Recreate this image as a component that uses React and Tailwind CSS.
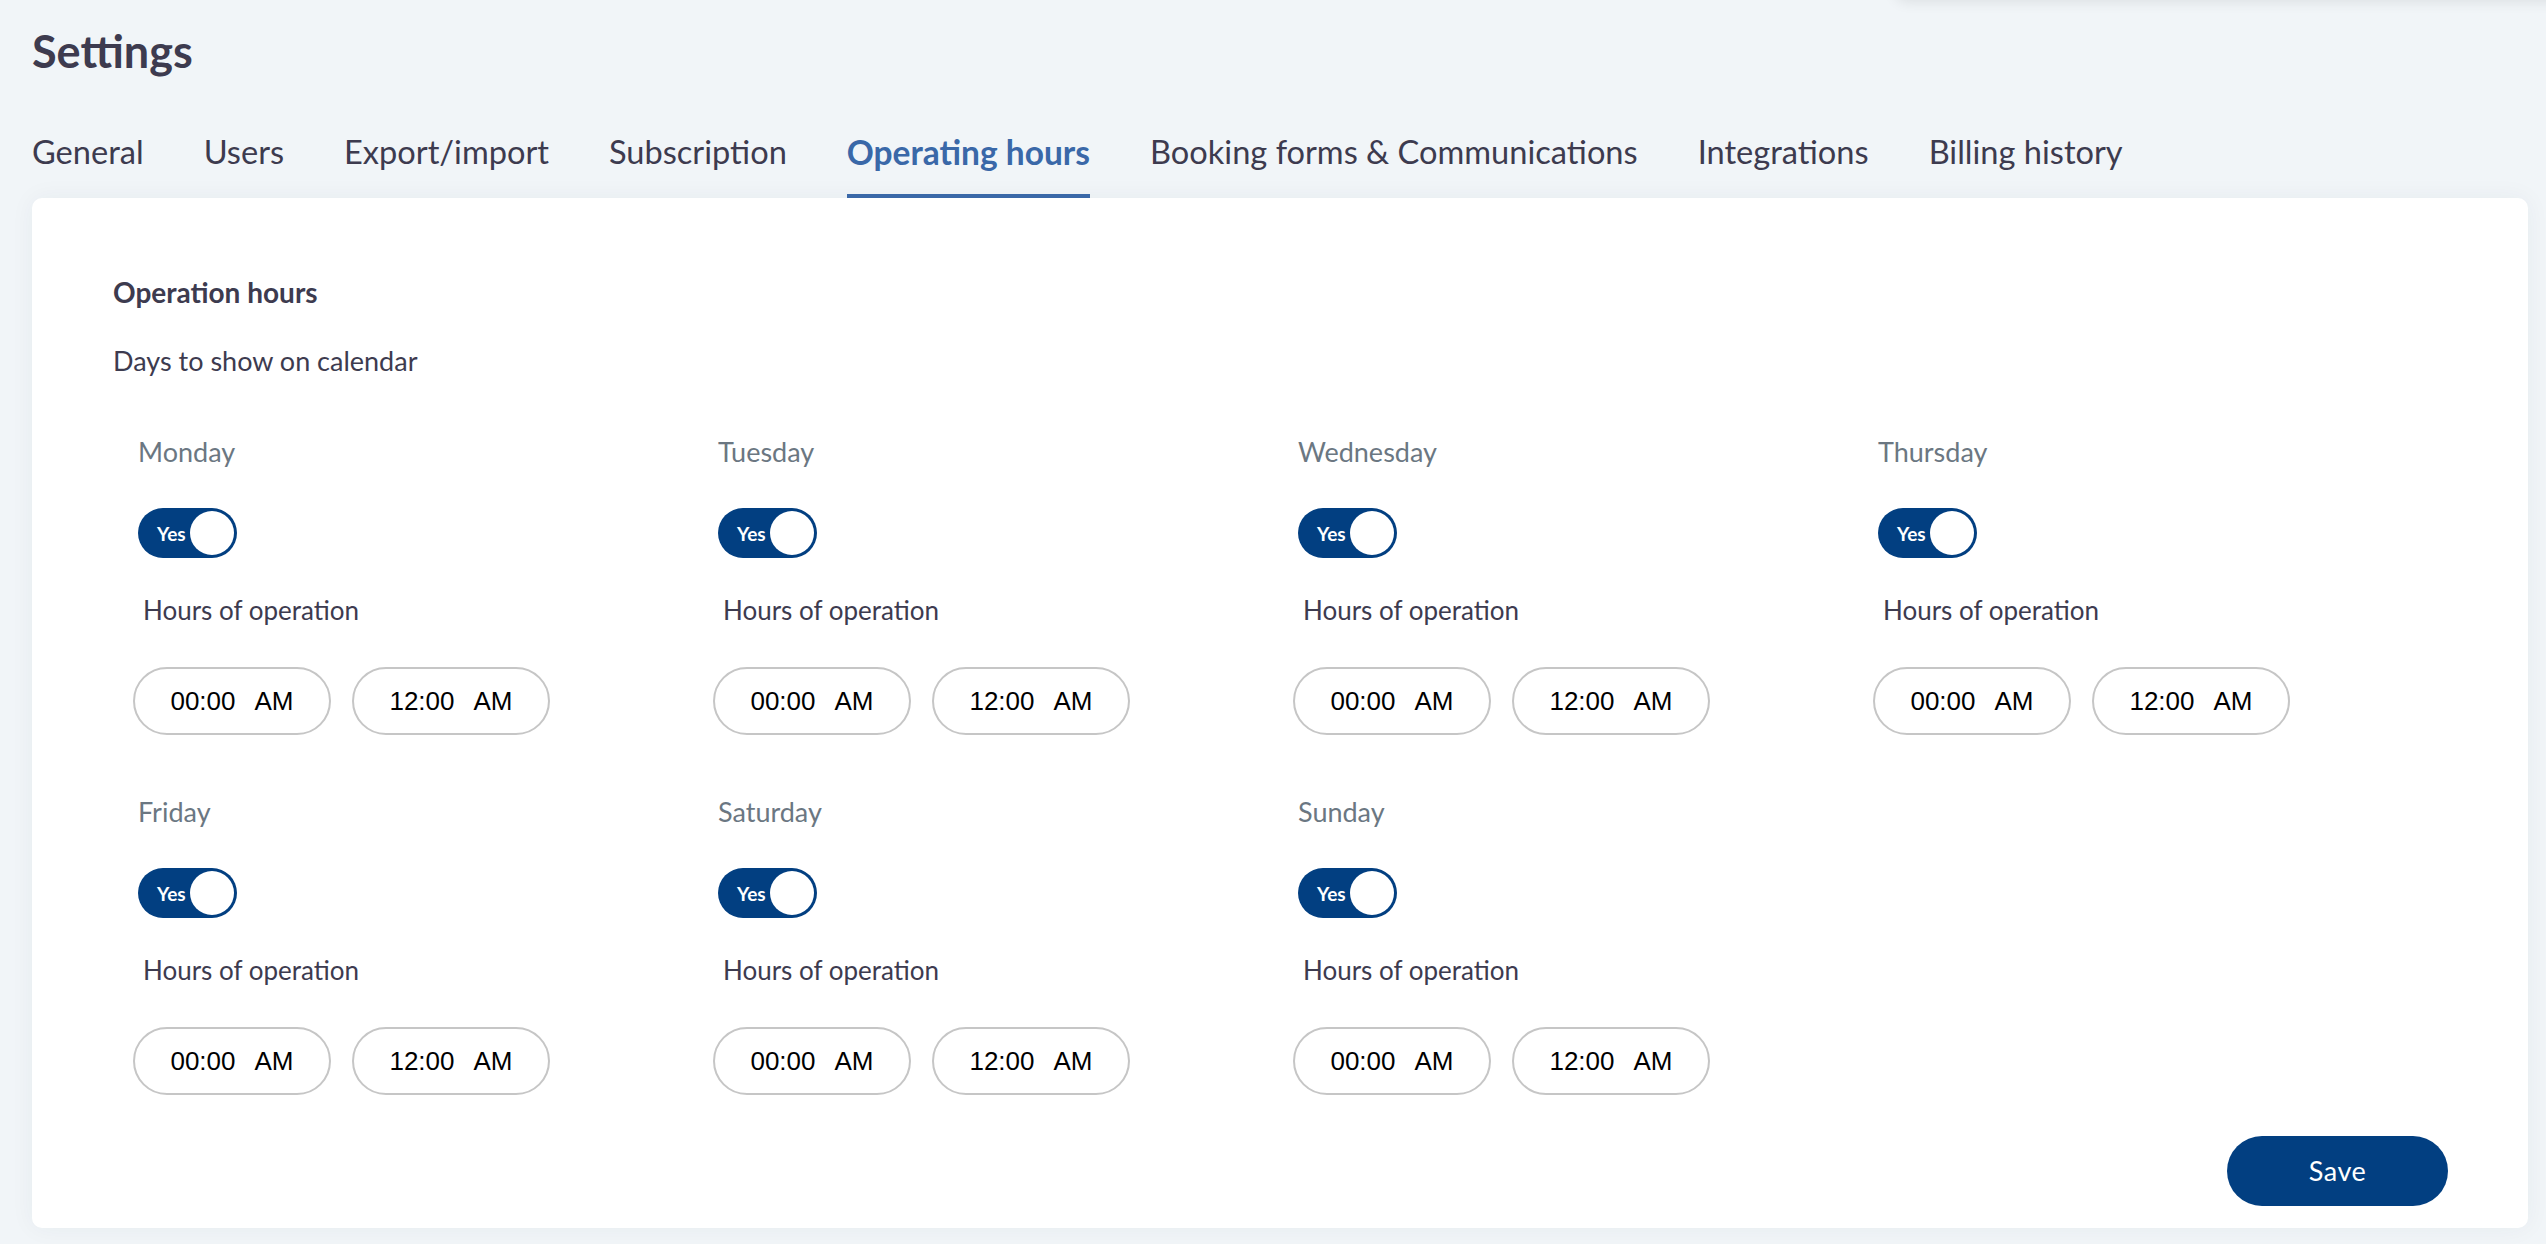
const tabs = [
  'General',
  'Users',
  'Export/import',
  'Subscription',
  'Operating hours',
  'Booking forms & Communications',
  'Integrations',
  'Billing history',
];

const days = ['Monday', 'Tuesday', 'Wednesday', 'Thursday', 'Friday', 'Saturday', 'Sunday'];

function Toggle() {
  return (
    <div className="w-[99px] h-[50px] rounded-full bg-[#023f81] flex items-center justify-between pl-[19px] pr-[3px]">
      <span className="text-white text-[19px] font-bold leading-none">Yes</span>
      <span className="w-[44px] h-[44px] rounded-full bg-white"></span>
    </div>
  );
}

function TimePill({ time }) {
  return (
    <div className="w-[198px] h-[68px] rounded-full border-2 border-[#c6c6c6] bg-white flex items-center justify-center gap-[19px] text-[26px] text-black font-['Liberation_Sans',Arial,sans-serif]">
      <span>{time}</span>
      <span>AM</span>
    </div>
  );
}

function DayColumn({ name }) {
  return (
    <div className="flex flex-col">
      <div className="pl-[5px] text-[27px] leading-[36px] text-[#6b7782]">{name}</div>
      <div className="pl-[5px] mt-[38px]">
        <Toggle />
      </div>
      <div className="pl-[10px] mt-[35px] text-[26px] leading-[34px] text-[#3d3b4f]">Hours of operation</div>
      <div className="flex gap-[21px] mt-[40px]">
        <TimePill time="00:00" />
        <TimePill time="12:00" />
      </div>
    </div>
  );
}

export default function App() {
  return (
    <div className="relative min-h-screen overflow-hidden bg-[#f1f5f8] font-['Lato','Open_Sans',sans-serif] text-[#3d3b4f]">
      {/* edge of a panel above the page */}
      <div className="absolute top-[-50px] left-[1895px] right-[-20px] h-[50px] rounded-b-xl bg-[#f1f5f8] shadow-[0_2px_14px_rgba(0,0,0,0.09)]"></div>

      <div className="px-8 pt-[23px]">
        <h1 className="text-[45px] font-bold leading-[56px]">Settings</h1>
        <nav className="flex gap-[60px] mt-[53px]">
          {tabs.map((t) => {
            const active = t === 'Operating hours';
            return (
              <div
                key={t}
                className={
                  active
                    ? 'text-[33.5px] leading-[40px] pb-[22px] border-b-4 border-[#3a68a8] text-[#3a68a8] font-bold'
                    : 'text-[32.6px] leading-[40px] pb-[22px] border-b-4 border-transparent'
                }
              >
                {t}
              </div>
            );
          })}
        </nav>
      </div>

      <div className="ml-8 mr-[18px] bg-white rounded-[10px] shadow-[0_0_24px_rgba(30,50,80,0.05)] pl-[81px] pr-[80px] pt-[76px] pb-[22px]">
        <h2 className="text-[28px] font-bold leading-[36px]">Operation hours</h2>
        <p className="text-[27px] leading-[36px] mt-[33px]">Days to show on calendar</p>

        <div className="ml-[20px] mt-[55px] grid grid-cols-[repeat(4,580px)] gap-y-[59px]">
          {days.map((d) => (
            <DayColumn key={d} name={d} />
          ))}
        </div>

        <div className="flex justify-end mt-[41px]">
          <button className="w-[221px] h-[70px] rounded-full bg-[#023f81] text-white text-[27px] tracking-[0.5px]">
            Save
          </button>
        </div>
      </div>
    </div>
  );
}
